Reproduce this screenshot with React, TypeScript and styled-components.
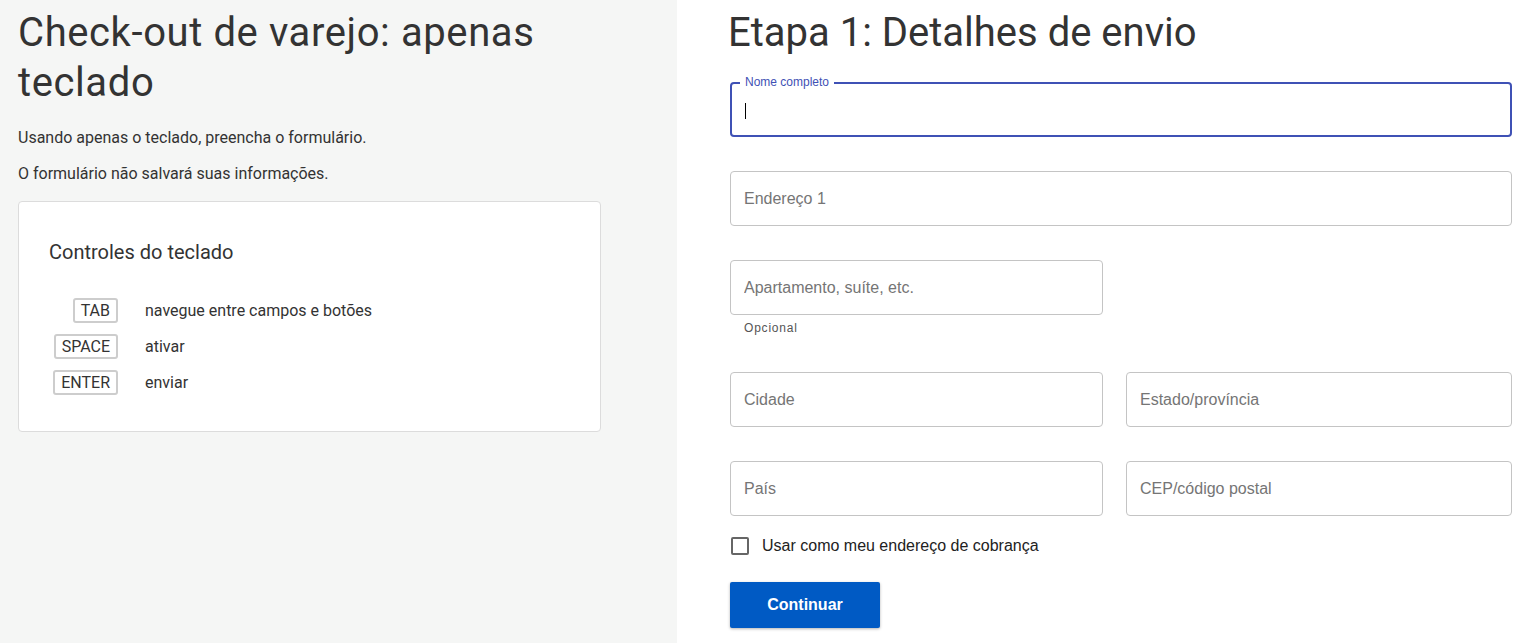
import React from "react";
import styled, { createGlobalStyle } from "styled-components";

const Global = createGlobalStyle`
  html, body { margin: 0; padding: 0; background: #fff; }
  * { box-sizing: border-box; }
`;

const Page = styled.div`
  display: grid;
  grid-template-columns: 677px 1fr;
  min-height: 643px;
  font-family: Roboto, "Noto Sans", sans-serif;
`;

const Intro = styled.section`
  background: #f5f6f5;
  padding: 8px 76px 0 18px;
  color: #3c4043;
`;

const Title = styled.h1`
  margin: 0;
  font-family: Roboto, sans-serif;
  font-weight: 400;
  font-size: 40px;
  line-height: 50px;
  letter-spacing: 0.6px;
  color: #333;
`;

const Para = styled.p`
  margin: 0;
  font-size: 16px;
  line-height: 36px;
  color: #333;
  &:first-of-type { margin-top: 12px; }
`;

const Card = styled.div`
  margin-top: 9px;
  background: #fff;
  border: 1px solid #dcdcdc;
  border-radius: 4px;
  padding: 36px 30px 36px 30px;
`;

const CardTitle = styled.h2`
  margin: 0 0 32px;
  font-weight: 400;
  font-size: 20px;
  line-height: 28px;
  color: #333;
`;

const KeyGrid = styled.div`
  display: grid;
  grid-template-columns: 69px 1fr;
  column-gap: 27px;
  row-gap: 11px;
  align-items: center;
`;

const Kbd = styled.kbd`
  justify-self: end;
  font-family: Roboto, sans-serif;
  font-size: 16px;
  line-height: 21px;
  padding: 0 6px;
  border: 2px solid #cdcdcd;
  border-radius: 3px;
  color: #333;
`;

const KeyDesc = styled.span`
  font-size: 16px;
  color: #333;
`;

const FormSide = styled.section`
  padding: 8px 20px 0 53px;
`;

const FormTitle = styled.h1`
  margin: 0 0 24px -2px;
  font-weight: 400;
  font-size: 40px;
  line-height: 50px;
  color: #333;
`;

const Fields = styled.div`
  display: grid;
  grid-template-columns: 373px 1fr;
  column-gap: 23px;
`;

const FieldWrap = styled.div<{ $span?: boolean; $gap?: number }>`
  grid-column: ${(p) => (p.$span ? "1 / -1" : "auto")};
  margin-bottom: ${(p) => p.$gap ?? 34}px;
`;

const Box = styled.div<{ $focused?: boolean; $half?: boolean }>`
  position: relative;
  height: 55px;
  width: ${(p) => (p.$half ? "373px" : "auto")};
  border: ${(p) => (p.$focused ? "2px solid #3f51b5" : "1px solid #c4c4c4")};
  border-radius: 4px;
  display: flex;
  align-items: center;
  padding-left: 13px;
`;

const Input = styled.input`
  border: none;
  outline: none;
  background: transparent;
  width: 100%;
  font-family: "Liberation Sans", Arial, sans-serif;
  font-size: 16px;
  color: #222;
  padding: 0;
  &::placeholder { color: #757575; opacity: 1; }
`;

const FloatLabel = styled.span`
  position: absolute;
  top: -9px;
  left: 8px;
  padding: 0 5px;
  background: #fff;
  font-family: "Liberation Sans", Arial, sans-serif;
  font-size: 12px;
  line-height: 14px;
  color: #3f51b5;
`;

const Caret = styled.span`
  position: absolute;
  left: 13px;
  top: 19px;
  width: 1px;
  height: 16px;
  background: #000;
`;

const Helper = styled.div`
  margin: 6px 0 0 14px;
  font-family: "Liberation Sans", Arial, sans-serif;
  font-size: 12px;
  letter-spacing: 0.8px;
  color: #555;
`;

const CheckRow = styled.label`
  display: flex;
  align-items: center;
  gap: 13px;
  margin-top: -13px;
  font-family: "Liberation Sans", Arial, sans-serif;
  font-size: 16px;
  color: #222;
`;

const CheckBox = styled.span`
  width: 18px;
  height: 18px;
  margin-left: 1px;
  border: 2px solid #666;
  border-radius: 2px;
`;

const Button = styled.button`
  margin-top: 27px;
  width: 150px;
  height: 46px;
  border: none;
  border-radius: 2px;
  background: #005ac4;
  color: #fff;
  font-family: "Liberation Sans", Arial, sans-serif;
  font-weight: 700;
  font-size: 16px;
  box-shadow: 0 1px 3px rgba(0, 0, 0, 0.3);
`;

type F = { label: string; span?: boolean; half?: boolean; helper?: string; focused?: boolean };

const fields: F[] = [
  { label: "Nome completo", span: true, focused: true },
  { label: "Endereço 1", span: true },
  { label: "Apartamento, suíte, etc.", span: true, half: true, helper: "Opcional" },
  { label: "Cidade" },
  { label: "Estado/província" },
  { label: "País" },
  { label: "CEP/código postal" },
];

const keys = [
  ["TAB", "navegue entre campos e botões"],
  ["SPACE", "ativar"],
  ["ENTER", "enviar"],
];

export default function App() {
  return (
    <>
      <Global />
      <Page>
        <Intro>
          <Title>Check-out de varejo: apenas teclado</Title>
          <Para>Usando apenas o teclado, preencha o formulário.</Para>
          <Para>O formulário não salvará suas informações.</Para>
          <Card>
            <CardTitle>Controles do teclado</CardTitle>
            <KeyGrid>
              {keys.map(([k, d]) => (
                <React.Fragment key={k}>
                  <Kbd>{k}</Kbd>
                  <KeyDesc>{d}</KeyDesc>
                </React.Fragment>
              ))}
            </KeyGrid>
          </Card>
        </Intro>
        <FormSide>
          <FormTitle>Etapa 1: Detalhes de envio</FormTitle>
          <Fields>
            {fields.map((f) => (
              <FieldWrap key={f.label} $span={f.span} $gap={f.helper ? 37 : 34}>
                <Box $focused={f.focused} $half={f.half}>
                  {f.focused ? (
                    <>
                      <FloatLabel>{f.label}</FloatLabel>
                      <Caret />
                      <Input aria-label={f.label} />
                    </>
                  ) : (
                    <Input placeholder={f.label} aria-label={f.label} />
                  )}
                </Box>
                {f.helper && <Helper>{f.helper}</Helper>}
              </FieldWrap>
            ))}
          </Fields>
          <CheckRow>
            <CheckBox />
            Usar como meu endereço de cobrança
          </CheckRow>
          <Button>Continuar</Button>
        </FormSide>
      </Page>
    </>
  );
}
